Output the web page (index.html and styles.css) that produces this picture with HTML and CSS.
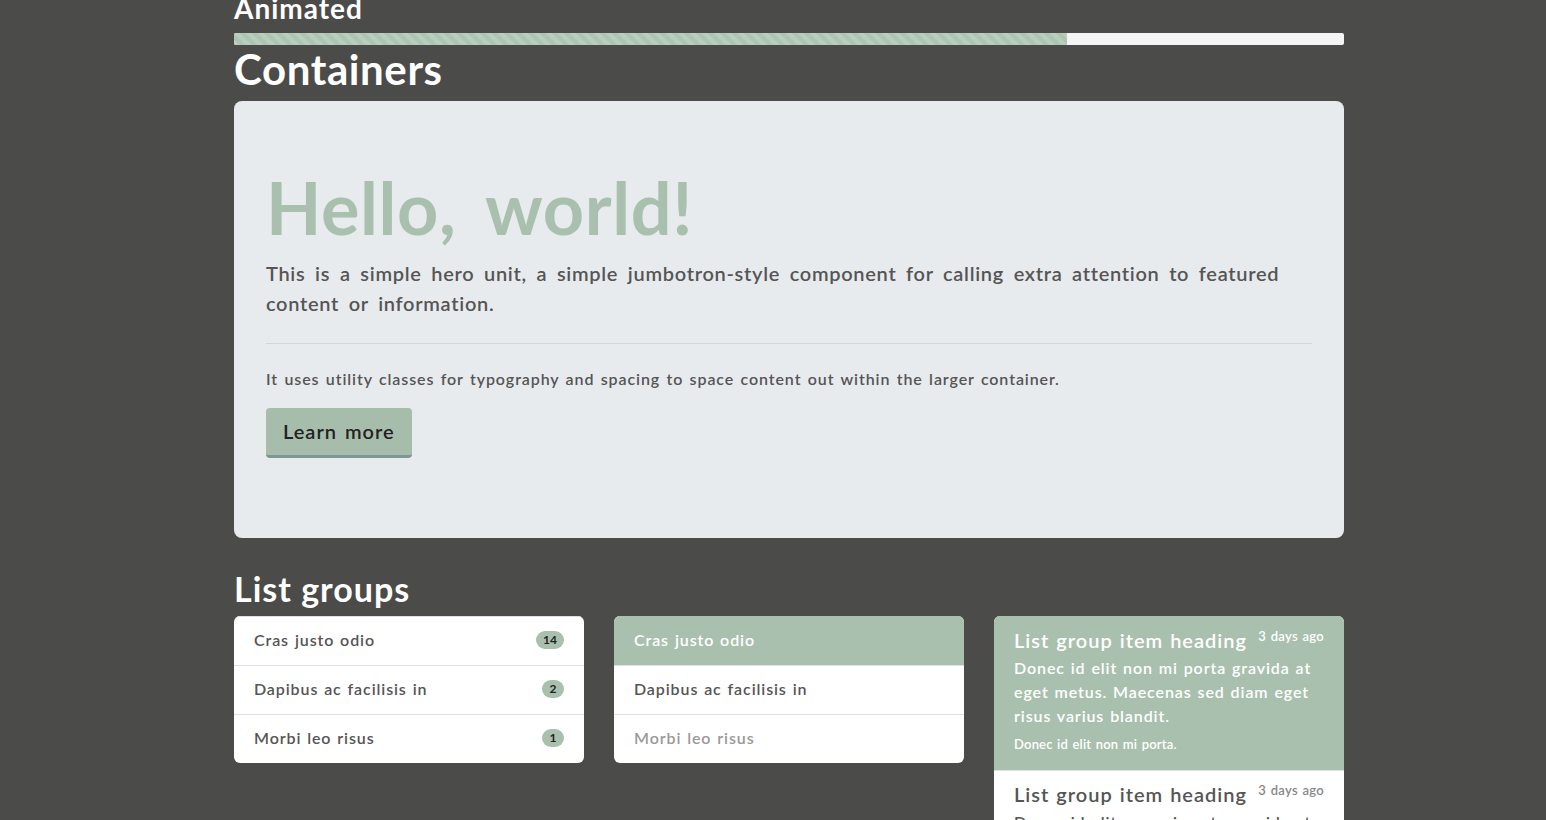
FILE: index.html
```html
<!DOCTYPE html>
<html>
<head>
<meta charset="utf-8">
<link rel="stylesheet" href="styles.css">
</head>
<body>
<main class="page">
  <h3 class="sub-title">Animated</h3>
  <div class="progress"><div class="progress-bar" style="width:75%"></div></div>

  <h1 class="section-title">Containers</h1>
  <section class="jumbotron">
    <h1 class="display">Hello, world!</h1>
    <p class="lead">This is a simple hero unit, a simple jumbotron-style component for calling extra attention to featured content or information.</p>
    <hr class="divider">
    <p class="note">It uses utility classes for typography and spacing to space content out within the larger container.</p>
    <p class="actions"><a class="btn-primary" href="#">Learn more</a></p>
  </section>

  <h2 class="section-title small">List groups</h2>
  <div class="lists">
    <ul class="list-group">
      <li class="item"><span>Cras justo odio</span><span class="badge">14</span></li>
      <li class="item"><span>Dapibus ac facilisis in</span><span class="badge">2</span></li>
      <li class="item"><span>Morbi leo risus</span><span class="badge">1</span></li>
    </ul>
    <ul class="list-group">
      <li class="item active">Cras justo odio</li>
      <li class="item">Dapibus ac facilisis in</li>
      <li class="item disabled">Morbi leo risus</li>
    </ul>
    <div class="list-group">
      <div class="item rich active">
        <div class="rich-head"><h5>List group item heading</h5><small>3 days ago</small></div>
        <p class="rich-body">Donec id elit non mi porta gravida at eget metus. Maecenas sed diam eget risus varius blandit.</p>
        <small class="rich-foot">Donec id elit non mi porta.</small>
      </div>
      <div class="item rich">
        <div class="rich-head"><h5>List group item heading</h5><small class="muted">3 days ago</small></div>
        <p class="rich-body">Donec id elit non mi porta gravida at eget metus. Maecenas sed diam eget risus varius blandit.</p>
        <small class="rich-foot muted">Donec id elit non mi porta.</small>
      </div>
    </div>
  </div>
</main>
</body>
</html>
```

FILE: styles.css
```css
* { box-sizing: border-box; }
html, body { margin: 0; padding: 0; }
body {
  background: #4b4b49;
  font-family: "Lato", "Open Sans", sans-serif;
  color: #555;
  overflow: hidden;
  height: 820px;
}
.page {
  width: 1110px;
  margin: -8px 0 0 234px;
}
.sub-title {
  margin: 0;
  font-size: 28px;
  font-weight: 700;
  color: #fff;
  line-height: 32px;
  letter-spacing: 1px;
}
.progress {
  margin-top: 9px;
  height: 12px;
  background: #f5f5f5;
  border-radius: 2px;
  overflow: hidden;
  display: flex;
}
.progress-bar {
  height: 100%;
  background-color: #aec5b3;
  background-image: linear-gradient(45deg, rgba(255,255,255,.15) 25%, transparent 25%, transparent 50%, rgba(255,255,255,.15) 50%, rgba(255,255,255,.15) 75%, transparent 75%, transparent);
  background-size: 12px 12px;
}
.section-title {
  margin: 0 0 8px;
  font-size: 42px;
  line-height: 48px;
  font-weight: 700;
  color: #fff;
  letter-spacing: 0.6px;
}
.section-title.small {
  font-size: 34px;
  line-height: 38px;
  margin: 32px 0 8px;
  letter-spacing: 1px;
}
.jumbotron {
  background: #e8ebee;
  border-radius: 8px;
  padding: 64px 32px;
}
.display {
  margin: 0 0 9px;
  font-size: 72px;
  line-height: 84px;
  font-weight: 700;
  color: #a9c0ae;
  letter-spacing: 0.6px;
  word-spacing: 12px;
}
.lead {
  margin: 0;
  font-size: 20px;
  line-height: 30px;
  font-weight: 600;
  color: #555;
  letter-spacing: 0.7px;
  word-spacing: 4px;
}
.divider {
  margin: 25px 0 23px;
  border: 0;
  border-top: 1px solid #d3d6d9;
}
.note {
  margin: 0 0 17px;
  font-size: 16px;
  line-height: 24px;
  font-weight: 600;
  color: #555;
  letter-spacing: 0.9px;
  word-spacing: 1.5px;
}
.actions { margin: 0 0 16px; }
.btn-primary {
  display: inline-block;
  background: #a7bdac;
  color: #222;
  text-decoration: none;
  font-size: 20px;
  line-height: 31px;
  font-weight: 600;
  padding: 8px 17px;
  border-radius: 4px;
  border-bottom: 3px solid #7f9794;
  letter-spacing: 1px;
  word-spacing: 2px;
}
.lists {
  display: grid;
  grid-template-columns: repeat(3, 350px);
  gap: 30px;
  align-items: start;
}
.list-group {
  margin: 0;
  padding: 0;
  list-style: none;
  background: #fff;
  border-radius: 6px;
  overflow: hidden;
}
.item {
  display: flex;
  justify-content: space-between;
  align-items: center;
  height: 49px;
  padding: 0 20px 3px;
  font-size: 16px;
  font-weight: 600;
  color: #555;
  border-top: 1px solid #dfdfdf;
  letter-spacing: 0.9px;
  word-spacing: 1px;
}
.item.active { background: #a9c0ae; color: #fff; border-color: #a9c0ae; }
.item.disabled { color: #999; }
.badge {
  background: #a9c0ae;
  color: #222;
  font-size: 12px;
  font-weight: 700;
  line-height: 18px;
  min-width: 22px;
  text-align: center;
  padding: 0 7px;
  border-radius: 10px;
  letter-spacing: 0;
}
.item.rich {
  display: block;
  height: auto;
  padding: 10px 20px 13px;
}
.rich-head {
  display: flex;
  justify-content: space-between;
  align-items: flex-start;
}
.rich-head h5 {
  margin: 0;
  font-size: 20px;
  line-height: 26px;
  font-weight: 600;
  letter-spacing: 1px;
}
.rich-head small {
  font-size: 13px;
  line-height: 18px;
  letter-spacing: 0.3px;
}
.rich-body {
  margin: 3px 0 6px;
  font-size: 16px;
  line-height: 24px;
}
.rich-foot {
  display: block;
  font-size: 13px;
  line-height: 20px;
  padding-bottom: 3px;
  letter-spacing: 0.2px;
}
.muted { color: #888; }
```
